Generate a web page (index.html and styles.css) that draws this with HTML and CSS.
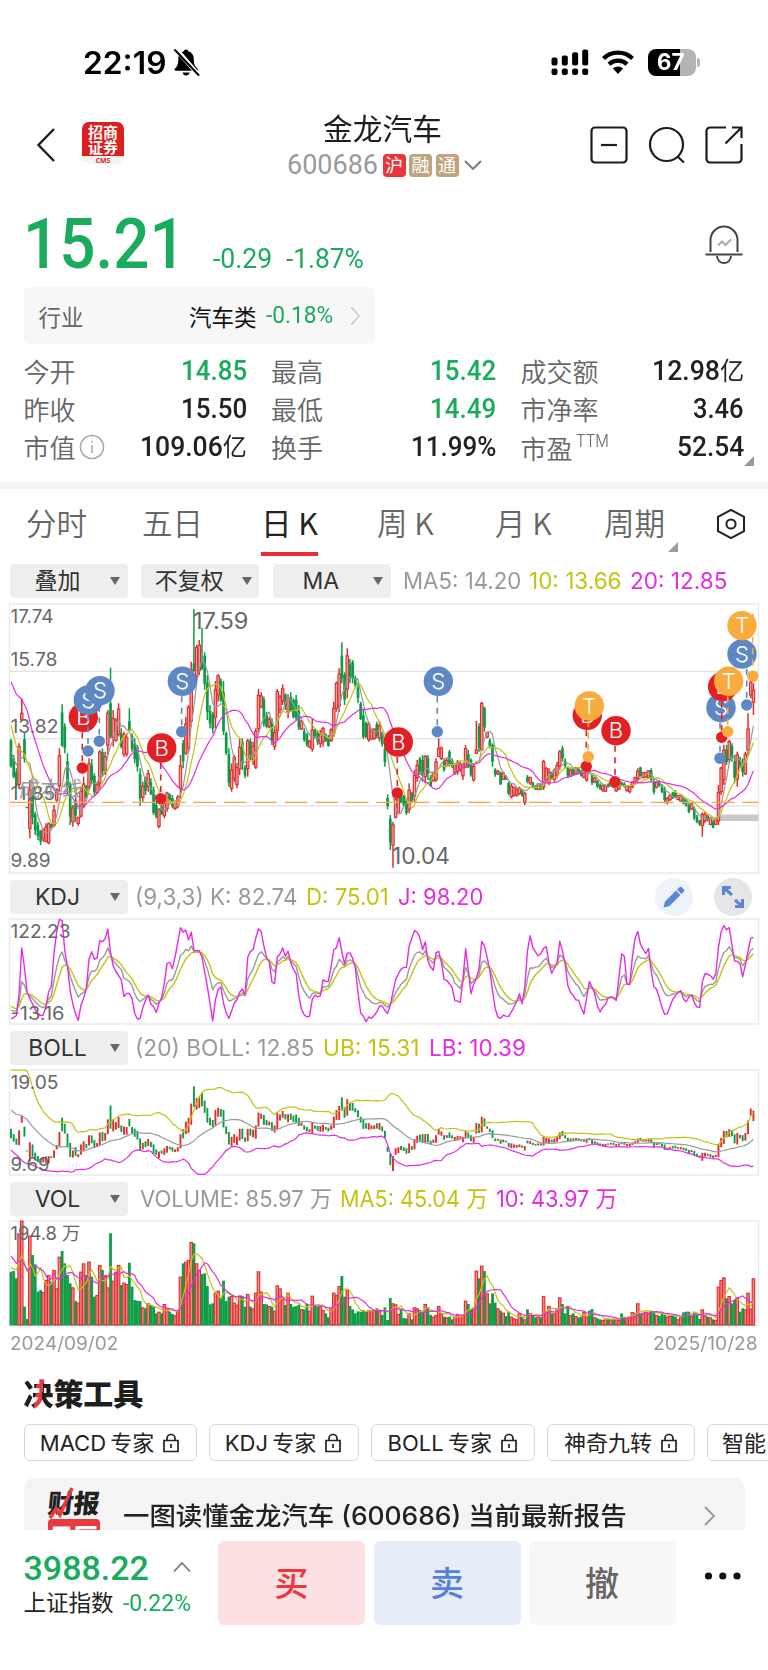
FILE: index.html
```html
<!DOCTYPE html>
<html lang="zh-CN">
<head>
<meta charset="utf-8">
<title>金龙汽车 600686</title>
<link rel="stylesheet" href="styles.css">
</head>
<body>
<div class="app">
  <div class="status">
    <span class="clock" data-w="83">22:19</span>
    <svg class="mute" width="28" height="30" viewBox="0 0 28 30"><path d="M13 1.500c1.300 0 2 .8 2.200 1.700 3.600 1 5.600 3.900 5.600 8 0 5 1.200 7 3.700 9.300.9 1 .3 2.200-1 2.200H3c-1.400 0-2-1.200-1-2.200C4.500 18.200 5.200 16 5.300 11.200c0-4.100 2-7 5.500-8 .2-.9.900-1.700 2.200-1.700zM9.500 24.500h7.200c-.5 1.900-1.800 3-3.600 3s-3.100-1.100-3.600-3z" fill="#000"/><path d="M3.500 1.500l22 25.500" stroke="#fff" stroke-width="4.500"/><path d="M2 2l23.500 25" stroke="#000" stroke-width="2" stroke-linecap="round"/></svg>
    <div class="status-right">
      <svg width="38" height="27" viewBox="0 0 38 27"><g fill="#000"><rect x="0.500" y="8.500" width="6" height="8" rx="2"/><rect x="10.800" y="6.500" width="6" height="10" rx="2"/><rect x="21.100" y="3.300" width="6" height="13.200" rx="2"/><rect x="31.200" y="0.500" width="6" height="16" rx="2"/><rect x="0.500" y="19.500" width="6" height="6.500" rx="2"/><rect x="10.800" y="19.500" width="6" height="6.500" rx="2"/><rect x="21.100" y="19.500" width="6" height="6.500" rx="2"/><rect x="31.200" y="19.500" width="6" height="6.500" rx="2"/></g></svg>
      <svg width="34" height="27" viewBox="0 0 34 27"><g fill="none" stroke="#000" stroke-width="4.200"><path d="M2.500 9.500a21 21 0 0 1 29 0"/><path d="M8 15.300a13 13 0 0 1 18 0"/></g><path d="M11.800 19.500a7.500 7.500 0 0 1 10.400 0L17 25z" fill="#000"/></svg>
      <div class="battery"><span data-w="27">67</span></div><i class="battery-tip"></i>
    </div>
  </div>

  <header class="header">
    <svg class="back" width="22" height="36" viewBox="0 0 22 36"><path d="M19 2L3.500 18 19 34" fill="none" stroke="#1d1d1f" stroke-width="2.400"/></svg>
    <div class="broker"><b data-w="30">招商</b><b data-w="30">证券</b><em>CMS</em></div>
    <div class="title">
      <h1 data-w="119">金龙汽车</h1>
      <div class="code"><span class="num" data-w="91">600686</span><i class="tag red">沪</i><i class="tag">融</i><i class="tag">通</i><svg width="20" height="12" viewBox="0 0 20 12"><path d="M2 2l8 8 8-8" fill="none" stroke="#777" stroke-width="1.800"/></svg></div>
    </div>
    <div class="tools">
      <svg width="38" height="38" viewBox="0 0 38 38"><rect x="1.500" y="1.500" width="35" height="35" rx="3.500"/><path d="M11 19h16"/></svg>
      <svg width="38" height="38" viewBox="0 0 38 38"><circle cx="18.500" cy="18.500" r="16.500"/><path d="M29.500 30.500l6.500 6"/></svg>
      <svg width="38" height="38" viewBox="0 0 38 38"><path d="M21 1.500H5A3.500 3.500 0 0 0 1.500 5v28A3.500 3.500 0 0 0 5 36.500h28a3.500 3.500 0 0 0 3.500-3.500V18M27 1.500h9.500V12M36.500 1.500L20.500 17.500"/></svg>
    </div>
  </header>

  <section class="quote">
    <div class="price-row">
      <span class="price num" data-w="163">15.21</span>
      <span class="chg num" data-w="59">-0.29</span>
      <span class="chg num" data-w="78">-1.87%</span>
      <svg class="alert" width="40" height="40" viewBox="0 0 40 40" fill="none" stroke="#444" stroke-width="2"><path d="M6.500 27V15a13.500 13.500 0 0 1 27 0v12M1.500 29.500h37M13 31c.5 4.500 3.500 7 7 7s6.500-2.500 7-7"/><path d="M14 20.500l4-4 3.500 3.500 5.500-5.500" stroke="#aaa"/></svg>
    </div>
    <div class="industry"><span class="lab">行业</span><span class="name">汽车类</span><span class="num green" data-w="67">-0.18%</span><svg width="12" height="22" viewBox="0 0 12 22"><path d="M2 2l8 9-8 9" fill="none" stroke="#ccc" stroke-width="1.600"/></svg></div>
    <div class="stats">
      <div><label>今开</label><span class="num green" data-w="66">14.85</span></div>
      <div><label>最高</label><span class="num green" data-w="66">15.42</span></div>
      <div><label>成交额</label><span class="num" data-w="92">12.98<u>亿</u></span></div>
      <div><label>昨收</label><span class="num" data-w="66">15.50</span></div>
      <div><label>最低</label><span class="num green" data-w="66">14.49</span></div>
      <div><label>市净率</label><span class="num" data-w="51">3.46</span></div>
      <div><label>市值<svg class="info" width="26" height="26" viewBox="0 0 26 26" fill="none" stroke="#aaa" stroke-width="1.600"><circle cx="13" cy="13" r="11.500"/><path d="M13 11v8M13 6.800v2"/></svg></label><span class="num" data-w="107">109.06<u>亿</u></span></div>
      <div><label>换手</label><span class="num" data-w="85">11.99%</span></div>
      <div class="corner"><label class="pe">市盈<sup data-w="33">TTM</sup></label><span class="num" data-w="67">52.54</span></div>
    </div>
  </section>

  <nav class="tabs">
    <span class="t1">分时</span><span class="t2">五日</span><span class="t3 on">日 K</span><span class="t4">周 K</span><span class="t5">月 K</span><span class="t6">周期</span>
    <svg width="30" height="32" viewBox="0 0 30 32" fill="none" stroke="#222" stroke-width="2"><path d="M15 1.800l13 7v14.400l-13 7-13-7V8.800z"/><circle cx="15" cy="16" r="4.600"/></svg>
  </nav>

  <div class="picks">
    <button>叠加</button><button>不复权</button><button>MA</button>
    <p><span class="c1" data-w="118">MA5: 14.20</span><span class="c2" data-w="93">10: 13.66</span><span class="c3" data-w="97">20: 12.85</span></p>
  </div>
  <svg id="kline" class="chart" width="768" height="275" viewBox="0 601 768 275"></svg>

  <div class="row">
    <button>KDJ</button>
    <p><span class="c1" data-w="162">(9,3,3) K: 82.74</span><span class="c2" data-w="83">D: 75.01</span><span class="c3" data-w="85">J: 98.20</span></p>
    <div class="round"><svg width="22" height="22" viewBox="0 0 22 22" fill="#5b87d6"><path d="M.5 21.500l1.500-6L13 4.500l4.500 4.500L6.500 20zM14 3.500l2-2c1-1 2-1 3 0l1.500 1.500c1 1 1 2 0 3l-2 2z"/></svg></div>
    <div class="round grey"><svg width="24" height="24" viewBox="0 0 24 24" fill="none" stroke="#5b87d6" stroke-width="3"><path d="M2.500 10V2.500H10M3 3l8 7M21.500 14v7.500H14M21 21l-7-6"/></svg></div>
  </div>
  <svg id="kdj" class="chart" width="768" height="110" viewBox="0 917 768 110"></svg>

  <div class="row">
    <button>BOLL</button>
    <p><span class="c1" data-w="179">(20) BOLL: 12.85</span><span class="c2" data-w="97">UB: 15.31</span><span class="c3" data-w="97">LB: 10.39</span></p>
  </div>
  <svg id="boll" class="chart" width="768" height="110" viewBox="0 1068 768 110"></svg>

  <div class="row vol">
    <button>VOL</button>
    <p><span class="c1" data-w="192">VOLUME: 85.97 万</span><span class="c2" data-w="148">MA5: 45.04 万</span><span class="c3" data-w="121">10: 43.97 万</span></p>
  </div>
  <svg id="volume" class="chart" width="768" height="110" viewBox="0 1219 768 110"></svg>
  <div class="dates"><span data-w="108">2024/09/02</span><span data-w="105">2025/10/28</span></div>

  <section class="decision">
    <h2><span class="jue">决</span>策工具</h2>
    <div class="chips">
      <span class="w1">MACD 专家<svg width="18" height="20" viewBox="0 0 18 20"><path d="M2 7.500h14v11H2zM5 7.500V5.500a4 4 0 0 1 8 0v2M9 11v4"/></svg></span>
      <span class="w2">KDJ 专家<svg width="18" height="20" viewBox="0 0 18 20"><path d="M2 7.500h14v11H2zM5 7.500V5.500a4 4 0 0 1 8 0v2M9 11v4"/></svg></span>
      <span class="w3">BOLL 专家<svg width="18" height="20" viewBox="0 0 18 20"><path d="M2 7.500h14v11H2zM5 7.500V5.500a4 4 0 0 1 8 0v2M9 11v4"/></svg></span>
      <span class="w4">神奇九转<svg width="18" height="20" viewBox="0 0 18 20"><path d="M2 7.500h14v11H2zM5 7.500V5.500a4 4 0 0 1 8 0v2M9 11v4"/></svg></span>
      <span class="w5">智能</span>
    </div>
    <div class="report">
      <div class="report-logo"><b>财报</b><svg width="28" height="38" viewBox="0 0 28 38"><path d="M2 33l6-9 4 6L24 3" fill="none" stroke="#ea3a40" stroke-width="3.500"/></svg><i>日历</i></div>
      <strong data-w="504">一图读懂金龙汽车 (600686) 当前最新报告</strong>
      <svg width="14" height="22" viewBox="0 0 14 22"><path d="M2 2l9 9-9 9" fill="none" stroke="#999" stroke-width="1.800"/></svg>
    </div>
  </section>

  <footer class="bar">
    <div class="index">
      <div class="index-top"><span class="num green" data-w="125">3988.22</span><svg width="20" height="12" viewBox="0 0 20 12"><path d="M2 10.500l8-8.500 8 8.500" fill="none" stroke="#777" stroke-width="1.800"/></svg></div>
      <div class="index-sub"><span data-w="90">上证指数</span><span class="num green" data-w="68">-0.22%</span></div>
    </div>
    <div class="act buy">买</div><div class="act sell">卖</div><div class="act cancel">撤</div>
    <svg class="more" width="38" height="10" viewBox="0 0 38 10" fill="#111"><circle cx="4.500" cy="5" r="3.600"/><circle cx="18.800" cy="5" r="3.600"/><circle cx="33" cy="5" r="3.600"/></svg>
  </footer>
</div>
<script src="charts.js"></script>
</body>
</html>
```

FILE: styles.css
```css
* { box-sizing: border-box; }
body {
  margin: 0;
  background: #fff;
  color: #222;
  font-family: Inter, "Noto Sans CJK SC", sans-serif;
}
.app { width: 768px; height: 1670px; overflow: hidden; }
svg { display: block; flex: none; }
button { border: 0; font: inherit; }
[data-w] { display: inline-block; white-space: pre; flex: none; }
[data-w] > .fit { display: inline-block; transform-origin: 0 50%; }
.num { font-family: Roboto, "Noto Sans CJK SC", sans-serif; font-weight: 500; }
.num u { text-decoration: none; font-weight: 400; }
.green { color: #1aab5c !important; }

/* status bar */
.status { height: 106px; padding: 19px 68px 0 83px; display: flex; align-items: center; }
.clock { font-size: 31px; font-weight: 600; color: #000; line-height: 40px; }
.mute { margin-left: 7px; }
.status-right { margin-left: auto; display: flex; align-items: center; }
.status-right > svg + svg { margin-left: 12px; }
.battery {
  width: 48px; height: 27px; margin-left: 13px; border-radius: 8px; padding-left: 9px;
  background: linear-gradient(90deg, #000 67%, #b4b4b4 67%);
  color: #fff; font-size: 23px; font-weight: 700; line-height: 27px;
}
.battery-tip { width: 3px; height: 9px; margin-left: 1px; border-radius: 0 4px 4px 0; background: #b4b4b4; }

/* header */
.header { height: 86px; padding: 0 25px 0 35px; display: flex; align-items: flex-start; }
.back { margin-top: 21px; }
.broker {
  width: 42px; height: 42px; margin: 16px 0 0 25px; border-radius: 7px; overflow: hidden;
  background: linear-gradient(#dc1f1f 82%, #f7f3f1 82%); color: #fff;
  display: flex; flex-direction: column; align-items: center; padding-top: 3px;
}
.broker b { height: 15px; font-size: 15px; line-height: 15px; font-weight: 700; }
.broker em { font: 700 7px/7px "Open Sans", sans-serif; color: #d22; margin-top: 2px; }
.title { flex: 1; display: flex; flex-direction: column; align-items: flex-start; padding-left: 199px; }
.title h1 { margin: 0; font-size: 30px; font-weight: 400; line-height: 42px; height: 42px; margin-top: 2px; color: #1d1d1f; }
.code { display: flex; align-items: center; height: 28px; margin: 1px 0 0 -36px; color: #999; gap: 3.500px; }
.code .num { font-size: 27px; font-weight: 400; line-height: 28px; margin-right: 1px; }
.tag { width: 23px; height: 23px; border-radius: 4px; background: #c0a47c; color: #fff; font-style: normal; font-size: 18px; line-height: 23px; text-align: center; }
.tag.red { background: #ea353c; }
.code svg { margin-left: 1px; }
.tools { display: flex; gap: 19.500px; margin-top: 20px; }
.tools svg { fill: none; stroke: #1d1d1f; stroke-width: 2.200; }

/* quote */
.quote { height: 297px; padding: 0 24px 0 23.500px; border-bottom: 7px solid #f4f4f4; }
.price-row { height: 95px; display: flex; align-items: flex-end; color: #1aab5c; }
.price { font-size: 70px; line-height: 80px; height: 83px; margin-left: -1px; }
.price-row .chg { font-size: 27px; line-height: 30px; height: 43px; margin-left: 27.500px; font-weight: 400; }
.price-row .chg + .chg { margin-left: 14px; }
.alert { margin: 0 0 22px auto; }
.industry {
  width: 351px; height: 57px; padding: 0 14px 0 15px; border-radius: 6px;
  background: #f7f7f7; display: flex; align-items: center; font-size: 22.500px;
}
.industry .lab { flex: 1; color: #666; }
.industry .name { color: #111; margin-right: 9px; }
.industry .num { font-size: 23px; margin-right: 16px; font-weight: 400; line-height: 26px; padding-top: 1px; }
.stats {
  display: grid; grid-template-columns: 223px 225px 223px; column-gap: 24.500px; grid-auto-rows: 38px;
  padding-top: 8px;
}
.stats div { display: flex; justify-content: space-between; align-items: center; font-size: 26px; line-height: 38px; }
.stats label { display: flex; align-items: center; color: #666; font-family: "Noto Sans CJK SC", sans-serif; font-weight: 350; height: 36px; line-height: 36px; }
.stats .num { font-size: 27.500px; }
.stats .num u { font-size: 25px; }
.info { margin-left: 3px; }
.stats sup { font: 300 17px/18px Inter, sans-serif; align-self: flex-start; margin: 3px 0 0 3px; }
.stats .pe { padding-top: 2px; height: 40px; }
.stats .corner { position: relative; }
.corner::after {
  content: ""; position: absolute; right: -10px; bottom: 0;
  border: 5px solid #999; border-left-color: transparent; border-top-color: transparent;
}

/* tabs */
.tabs { height: 74px; display: flex; color: #666; font-size: 30.500px; font-weight: 350; line-height: 67px; padding-left: 26px; font-family: "Noto Sans CJK SC", sans-serif; }
.tabs span { white-space: pre; flex: none; height: 67px; }
.t1, .t2 { width: 116px; }
.t3 { width: 57px; margin-left: 3px; text-align: center; }
.tabs .on { color: #222; font-weight: 400; border-bottom: 4px solid #ec2a30; }
.t4 { margin-left: 59px; width: 118px; }
.t5 { width: 109px; }
.t6 { width: 74px; position: relative; }
.t6::after { content: ""; position: absolute; right: 0; bottom: 4px; border: 5px solid #999da3; border-left-color: transparent; border-top-color: transparent; }
.tabs svg { margin: 19px 0 0 38px; }

/* indicator rows */
.picks, .row { display: flex; align-items: center; padding: 0 10px 0 9.500px; }
.picks { height: 38px; padding-bottom: 2px; }
.row { height: 41px; }
.picks button, .row button {
  width: 118px; height: 34px; margin-right: 13.700px; padding: 0 22px 0 0; border-radius: 4px; background: #eee;
  color: #333; font-size: 23px; line-height: 34px; position: relative; text-align: center; flex: none;
}
.picks button::after, .row button::after {
  content: ""; position: absolute; right: 7.500px; top: 13px;
  border: 5.500px solid transparent; border-top: 8px solid #666; border-bottom: 0;
}
.picks p, .row p { margin: 0 auto 0 -2px; display: flex; gap: 8px; font-size: 23px; line-height: 34px; white-space: nowrap; font-family: Inter, "Noto Sans CJK SC", sans-serif; }
.row p { margin-left: -6.500px; gap: 9px; }
.row.vol p { margin-left: -1.500px; gap: 8px; }
.c1 { color: #999; }
.c2 { color: #c3c313; }
.c3 { color: #e62be6; }
.round { width: 38px; height: 38px; border-radius: 50%; background: #edf2fb; display: grid; place-items: center; margin-right: 21px; }
.round.grey { background: #e6e6e8; margin-right: 6px; }
.chart text { font-family: Inter, "Noto Sans CJK SC", sans-serif; fill: #666; }
.frame { fill: none; stroke: #e8e8e8; stroke-width: 1.300; }
.grid { stroke: #e2e2e2; stroke-width: 1.200; }
.line { fill: none; stroke-width: 1.200; stroke-linejoin: round; }
.ma5 { stroke: #999; }
.ma10 { stroke: #c3c313; }
.ma20 { stroke: #e62be6; }
.kdj .line { stroke-width: 1.400; }
.dates { height: 30px; padding: 0 10px; display: flex; justify-content: space-between; align-items: center; font-size: 18.500px; line-height: 28px; padding-bottom: 2px; color: #999; }

/* decision tools */
.decision { height: 171px; overflow: hidden; padding-left: 23.500px; }
.decision h2 { margin: 12px 0 0; font-size: 30px; line-height: 42px; font-weight: 900; letter-spacing: -.1px; color: #1e1e1e; font-family: "Noto Sans CJK SC", sans-serif; }
.jue { background: linear-gradient(96deg, #1e1e1e 42%, #ea3a40 42%, #ea3a40 62%, #1e1e1e 62%); -webkit-background-clip: text; background-clip: text; color: transparent; }
.chips { display: flex; gap: 12px; margin-top: 11px; height: 37px; }
.chips span {
  flex: none; height: 37px; border: 1.500px solid #d8d8d8; border-radius: 6px; display: flex; align-items: center; justify-content: center; gap: 8px;
  font-size: 22px; color: #222; white-space: nowrap; line-height: 34px; word-spacing: -2px;
}
.chips svg { fill: none; stroke: #222; stroke-width: 1.700; }
.w1 { width: 173px; }
.w2 { width: 150px; }
.w3 { width: 164.500px; }
.w4 { width: 148px; }
.w5 { width: 100px; }
.chips .w5 { justify-content: flex-start; padding-left: 14px; }
.report { width: 721px; height: 80px; margin-top: 17px; border-radius: 10px; background: #f4f4f4; display: flex; align-items: flex-start; }
.report-logo { width: 54px; margin: 7px 0 0 24px; position: relative; flex: none; }
.report-logo b { display: block; font: 900 26px/34px "Noto Sans CJK SC", sans-serif; height: 34px; transform: skewX(-6deg); color: #222; }
.report-logo svg { position: absolute; left: 0; top: 0; }
.report-logo i { display: block; width: 52px; height: 32px; border-radius: 4px 4px 0 0; background: #ea3a40; color: #fff; font: 900 24px/34px "Noto Sans CJK SC", sans-serif; text-align: center; }
.report strong { font-size: 25.500px; line-height: 40px; font-weight: 500; margin: 18px 0 0 21px; }
.report > svg { margin: 27px 28px 0 auto; }

/* bottom bar */
.bar { height: 140px; padding-left: 23.500px; display: flex; background: #fff; }
.index { width: 194.500px; padding-top: 18px; }
.index-top { display: flex; align-items: center; height: 40px; gap: 23px; }
.index-top .num { font-size: 34px; line-height: 40px; }
.index-top svg { margin-bottom: 3px; }
.index-sub { display: flex; align-items: center; height: 29px; gap: 9px; font-size: 22.500px; line-height: 28px; }
.index-sub .num { font-size: 24px; font-weight: 400; }
.act { width: 147px; height: 84px; margin: 11px 8.500px 0 0; border-radius: 6px; font-size: 34px; line-height: 86px; text-align: center; font-weight: 500; }
.act.sell, .act.cancel { margin-right: 8px; }
.buy { background: #fde0e1; color: #ed363d; }
.sell { background: #e6ecf8; color: #5582d8; }
.cancel { background: #f7f7f7; color: #666; }
.more { margin: 41px 0 0 20px; }
```

FILE: charts.js
```js
// Candles: colour letter, high and low, in thirds of a pixel below y=595.
const CANDLES = `g432,518 g480,550 g520,578 r445,582 r310,375 g412,503 k630,640 r555,730 g575,688 g650,720 g680,735 g705,750
r700,740 r685,742 r682,748 g685,700 r630,697 r580,620 r460,590 g328,455 g385,475 g475,600 g560,690 r630,695 g600,680 r665,692
r575,668 r545,640 g570,610 r490,585 g492,565 g535,600 r562,598 r465,585 g460,545 r470,540 r345,480 g218,430 r345,455 r370,440
r325,425 g400,460 r410,485 r415,485 g340,410 g415,470 g430,505 g450,530 g520,632 r560,620 g545,600 r525,590 g550,600 g575,660
g620,670 r640,700 g630,660 r610,670 r590,650 g595,620 g600,640 r620,645 r600,640 r480,610 g435,520 r365,480 r330,470 r200,395
g42,230 r150,255 r135,240 g98,225 g172,285 g240,375 g330,400 g350,415 r258,400 r238,320 g250,320 g258,420 g410,480 g460,575
r505,590 r480,560 r505,580 r430,540 g430,525 g510,550 r432,545 g430,495 r440,510 r400,522 r282,410 r292,340 g305,395 g350,400
r365,400 g370,450 r400,465 r282,435 r300,355 r268,330 g295,345 r298,370 g292,350 g310,370 g300,375 g330,405 r375,405 g400,440
g415,455 r435,460 r370,470 g400,430 g405,450 r405,458 r395,455 g415,440 g420,455 r400,440 r320,425 r260,350 r220,350 g142,265
g232,330 r160,310 g192,265 g195,265 g242,280 g262,325 g320,375 g345,432 g380,430 r380,440 r400,435 r400,435 g380,430 r378,440
g410,455 g450,515 g598,643 g660,765 r680,818 r610,670 r600,655 g590,625 g600,635 g610,660 r565,655 g590,625 r525,620 r495,560
g485,540 g480,560 r480,565 g480,555 g540,575 r530,560 r490,560 r430,485 r455,495 g490,530 r490,515 g465,515 g490,520 r505,540
r495,540 r500,530 r505,555 r450,520 g465,520 g490,545 r505,560 r378,475 g385,470 r320,465 g335,410 r410,430 g430,460 g445,515
g520,545 r525,540 g530,570 r530,555 g540,555 g560,600 r565,610 r575,605 r580,605 r575,600 g585,605 r590,630 g540,565 r545,570
g560,580 g570,585 r565,585 g565,585 r495,585 r515,560 r520,570 g530,555 r520,560 r500,550 r465,525 g452,500 g490,520 g515,550
r520,545 g518,540 r515,540 g518,538 g525,545 r530,550 r520,560 g515,535 g535,570 r545,565 g555,580 g565,585 r570,590 r570,590
g565,578 r560,575 g560,580 r570,590 r565,585 g560,572 g562,578 r570,590 r570,595 r560,580 r545,565 r520,560 g515,545 r530,550
r530,548 r525,550 g520,560 g550,598 r560,580 g555,575 g568,595 g575,625 r605,628 r600,618 g590,612 g585,610 r600,615 r600,620
g605,628 g610,635 g625,655 r625,645 g635,675 g660,685 g675,692 r652,725 r650,685 g660,680 r665,690 g675,700 r670,690 r570,690
r515,600 r450,570 g450,510 r435,505 g445,500 g480,565 r470,575 g485,520 g490,545 r470,540 r355,480 r245,310 r265,360`.trim().split(/\s+/).map((s, i) => {
  const [h, l] = s.slice(1).split(',').map(Number);
  const c = s[0], d = l - h;
  let top = h + d * (0.05 + (i * 37 % 11) / 50), bot = l - d * (0.05 + (i * 53 % 13) / 60);
  return { c, h, l, top, bot };
});
const BODIES = { 4: [355, 374], 19: [352, 452], 37: [325, 425], 44: [378, 405], 68: [205, 228], 71: [200, 222], 112: [405, 462], 123: [182, 250], 142: [690, 750], 159: [460, 485], 173: [465, 475], 175: [325, 465], 257: [658, 692], 274: [402, 465], 275: [262, 300], 276: [285, 322] };
for (const i in BODIES) [CANDLES[i].top, CANDLES[i].bot] = BODIES[i];

// Bar tops for the volume pane, in thirds of a pixel below y=1170.
const VOLUMES = `305 303 325 190 152 410 447 197 255 283 365 360 366 330 315 335 300 355 260 243 280 315 340 352 393 398 305 280 315 275
320 380 375 285 300 318 352 190 332 305 285 345 338 342 278 350 390 392 393 412 415 400 405 410 430 425 430 402 415 425 432 436 425 320
280 275 270 216 220 280 300 312 310 348 403 400 368 362 385 332 393 380 378 398 404 378 380 410 372 410 415 368 304 365 402 403 408 410 422
346 355 385 405 368 402 410 408 404 417 418 402 422 377 408 410 409 420 430 442 415 368 375 348 318 380 360 408 418 430 424 425 420 425
420 422 420 415 420 435 412 450 384 400 403 432 418 444 445 430 448 412 415 420 425 402 412 435 440 435 408 430 440 442 440 448 440 432
438 435 392 402 418 415 302 325 287 303 370 400 370 398 415 422 428 438 425 440 445 448 430 440 448 418 430 435 442 440 442 378 425 408
430 430 415 382 402 430 408 435 430 438 442 440 425 440 422 417 442 445 448 450 448 445 448 446 448 450 430 440 442 438 426 430 400 430
428 425 430 422 425 435 438 430 435 440 438 435 440 448 442 427 425 425 438 425 430 447 418 436 440 442 448 450 350 330 322 385 378 400 390
382 425 415 418 368 416 325`.trim().split(/\s+/).map(Number);

// J line knots (x, y) in thirds of a pixel from (0, 870).
const J = `33,447 41,442 49,438 57,375 65,232 73,290 81,365 89,385 97,400 105,418 113,430 121,437 130,435 138,410 146,365 154,350
162,250 170,185 178,148 186,148 194,240 202,285 210,360 218,400 226,430 235,452 243,405 251,385 259,355 267,268 275,245 283,268
291,265 299,212 307,216 315,208 323,173 332,250 340,290 348,305 364,330 372,380 380,370 388,370 396,385 404,430 412,447 420,447
428,415 436,392 444,373 452,402 461,410 469,428 477,400 485,382 493,340 501,280 509,277 517,297 525,262 533,220 541,172 549,187
557,178 565,212 573,182 582,242 598,242 606,262 614,305 622,350 630,400 638,455 646,390 654,360 662,348 670,398 678,427 686,447
694,425 702,400 710,392 718,368 727,357 735,378 743,262 751,245 759,240 767,205 775,176 783,182 791,225 799,262 807,270 815,335
823,350 831,262 839,255 847,230 855,262 863,238 871,275 879,298 887,298 895,370 903,415 911,433 919,440 928,443 936,390 944,375
960,385 968,328 984,340 992,300 1000,240 1009,235 1017,200 1033,285 1041,250 1049,247 1057,262 1065,285 1073,360 1081,428
1089,435 1097,458 1105,440 1113,446 1129,430 1137,408 1147,408 1162,433 1172,402 1186,330 1202,298 1212,292 1220,292 1227,230
1243,182 1251,185 1259,200 1267,242 1275,210 1283,270 1299,308 1307,250 1315,240 1323,268 1331,328 1339,330 1356,350 1364,392
1372,392 1380,403 1388,340 1396,230 1404,290 1412,375 1420,345 1436,310 1444,213 1452,222 1468,290 1476,350 1484,410 1492,440
1500,448 1508,435 1525,441 1542,412 1550,395 1558,370 1566,403 1574,355 1582,245 1590,195 1598,232 1614,258 1622,252 1632,233
1639,230 1647,280 1655,310 1671,280 1679,213 1687,240 1695,280 1703,345 1711,367 1719,375 1727,390 1735,388 1743,412 1751,437
1759,390 1767,332 1783,365 1791,405 1799,428 1807,412 1815,408 1823,385 1831,380 1842,385 1848,398 1856,330 1864,252 1872,248
1880,340 1888,355 1896,270 1904,210 1912,177 1920,220 1928,235 1937,252 1945,230 1953,300 1961,350 1969,355 1977,380 1985,410
1993,433 2001,433 2009,412 2017,390 2025,378 2033,370 2041,357 2049,385 2057,398 2073,370 2081,395 2098,422 2106,340 2114,310
2130,315 2138,328 2146,325 2154,240 2162,190 2170,163 2178,182 2187,168 2195,220 2203,273 2219,275 2227,325 2235,290 2243,250
2251,205 2259,202`;

const N = CANDLES.length;
const zx = i => 33 + 8.07 * i;
const X = i => zx(i) / 3;
const knots = s => s.trim().split(/\s+/).map(p => p.split(',').map(Number));
const at = (ks, x) => {
  for (let i = 1; i < ks.length; i++) if (x <= ks[i][0]) {
    const [a, b] = [ks[i - 1], ks[i]];
    return a[1] + (b[1] - a[1]) * Math.max(0, (x - a[0]) / (b[0] - a[0]));
  }
  return ks[ks.length - 1][1];
};
const f = n => n.toFixed(2);
const path = (ys, cls, y0) => `<polyline class="line ${cls}" points="${ys.map((y, i) => f(X(i)) + ',' + f(y0 + y / 3)).join(' ')}"/>`;
// Moving average; the days before the window fills come from the given knots.
const ma = (v, n, lead) => v.map((_, i) => i < n - 1 && lead ? at(lead, zx(i)) : v.slice(Math.max(0, i - n + 1), i + 1).reduce((a, b) => a + b) / Math.min(n, i + 1));
const label = (x, y, s, size, w, extra = '') => `<text x="${x}" y="${y}" font-size="${size}" textLength="${w}" lengthAdjust="spacingAndGlyphs" ${extra}>${s}</text>`;
const frame = (y, h) => `<rect class="frame" x="9.500" y="${y}" width="749" height="${h}"/>`;
const RED = '#e22b2b', GREEN = '#0d9b45';

const close = CANDLES.map(k => k.c === 'r' ? k.top : k.bot);
const lead5 = knots('33,470 49,510 57,495 65,485');
const lead10 = knots('33,390 49,455 65,468 73,478 89,520 105,560');
const lead20 = knots('33,260 49,298 65,312 81,345 97,410 113,460 129,510 146,550 162,585 178,598 188,594');
const ma5 = ma(close, 5, lead5), ma10 = ma(close, 10, lead10), ma20 = ma(close, 20, lead20);

// K line pane
let s = frame(604, 269);
for (const y of [671.3, 738.6, 805.8]) s += `<path class="grid" d="M9.500 ${y}H758.500"/>`;
s += '<rect x="717" y="814.500" width="41.500" height="6.500" fill="#c9c9c9"/>';
CANDLES.forEach((k, i) => {
  const x = X(i), Y = v => 595 + v / 3;
  const col = k.c === 'r' ? RED : k.c === 'g' ? GREEN : '#555';
  if (k.c === 'k') { s += `<path d="M${f(x - 1.500)} ${Y(638)}h3" stroke="#555" stroke-width="1.200"/>`; return; }
  s += `<path d="M${f(x)} ${f(Y(k.h))}V${f(Y(k.l))}" stroke="${col}" stroke-width="1.500"/>`;
  s += k.c === 'r'
    ? `<rect x="${f(x - 1.200)}" y="${f(Y(k.top))}" width="2.400" height="${f((k.bot - k.top) / 3)}" fill="#f2a0a0" stroke="${col}" stroke-width="1.100"/>`
    : `<rect x="${f(x - 1.350)}" y="${f(Y(k.top))}" width="2.700" height="${f((k.bot - k.top) / 3)}" fill="${col}"/>`;
});
s += path(ma5, 'ma5', 595) + path(ma10, 'ma10', 595) + path(ma20, 'ma20', 595);
s += '<path d="M10.200 802.300H758" stroke="#fba63c" stroke-width="1.300" stroke-dasharray="22.800 7.700"/>';
s += label(10.5, 622.5, '17.74', 18, 43) + label(10.5, 666, '15.78', 18, 47) + label(10.5, 733, '13.82', 18, 48) + label(10.5, 800, '11.85', 18, 45) + label(10.5, 866.5, '9.89', 18, 40);
s += label(193, 628.500, '17.59', 22.500, 55.500) + label(392, 864, '10.04', 22.500, 58);
s += label(19, 796, '成本线', 21, 64, 'style="fill:#999;font-weight:350"');
const COL = { B: '#e22023', S: '#5d88c3', T: '#faab3d' };
const MARKS = [['B', 83.3, 717.3, 82.3, 768], ['S', 88.3, 700, 88, 751], ['S', 100, 690.7, 99.3, 741.3], ['B', 161.7, 748, 160.7, 798.7], ['S', 182.3, 681.3, 181.7, 731.7],
  ['B', 398.3, 742, 397.3, 793], ['S', 438.3, 681.3, 437.3, 731.7], ['B', 587.3, 715.3, 586.3, 766.3], ['T', 589.3, 706, 588.3, 756.7], ['B', 616, 730.7, 615, 781.7],
  ['S', 721, 707.7, 720, 758.3], ['B', 722.7, 686.7, 721.7, 737.3], ['T', 728.7, 681.3, 727.7, 731.7], ['S', 742, 654, 746.7, 705], ['T', 742, 625.7, 752.7, 676.3]];
for (const [t, x, y, dx, dy] of MARKS) {
  s += `<circle cx="${x}" cy="${y}" r="14.700" fill="${COL[t]}"/><text x="${x}" y="${y + 7.6}" font-size="22" text-anchor="middle" style="fill:#fff;font-weight:300">${t}</text>`;
  const start = dx > 750 ? y - 12 : y + 15;
  s += `<path d="M${dx} ${start}V${dy}" stroke="${COL[t]}" stroke-width="1.600" stroke-dasharray="6 5.500"/><circle cx="${dx}" cy="${dy}" r="5.700" fill="${COL[t]}"/>`;
}
document.getElementById('kline').innerHTML = s;

// KDJ pane: J = 3K - 2D and D follows K with a one-third weight
const jk = knots(J), j = CANDLES.map((_, i) => at(jk, zx(i)));
let d = 402;
const D = j.map(v => d = (6 * d + v) / 7), K = j.map((v, i) => (v + 2 * D[i]) / 3);
s = frame(919, 105) + `<g class="kdj">${path(K, 'ma5', 870)}${path(D, 'ma10', 870)}${path(j, 'ma20', 870)}</g>`;
s += label(10.5, 937.5, '122.23', 18, 60) + label(10.5, 1019.5, '-13.16', 18, 54);
document.getElementById('kdj').innerHTML = s;

// BOLL pane: the candles again on the 9.69 to 19.05 scale, with 20-day bands
const by = v => (1084.7 + (595 + v / 3 - 604) * 0.3272 - 870) * 3;
const up0 = knots('33,600 73,600 81,603 90,625 97,650 113,695 130,725 146,742 162,755 175,757 188,748');
const lo0 = knots('33,840 60,865 75,880 92,882 110,892 140,902 175,905 190,905');
const up = [], lo = [], mid = ma20.map(by);
close.forEach((_, i) => {
  if (i < 19) { up.push(at(up0, zx(i))); lo.push(at(lo0, zx(i))); return; }
  const w = close.slice(i - 19, i + 1).map(by), m = w.reduce((a, b) => a + b) / 20;
  const sd = Math.sqrt(w.reduce((a, b) => a + (b - m) ** 2, 0) / 19);
  up.push(Math.max(600, m - 2 * sd)); lo.push(Math.min(913, m + 2 * sd));
});
s = frame(1070, 105);
CANDLES.forEach((k, i) => {
  s += `<path d="M${f(X(i))} ${f(870 + by(k.h) / 3)}V${f(870 + by(k.l) / 3)}" stroke="${k.c === 'r' ? RED : k.c === 'g' ? GREEN : '#777'}" stroke-width="1.900"/>`;
});
s += path(mid, 'ma5', 870) + path(up, 'ma10', 870) + path(lo, 'ma20', 870);
s += label(10.5, 1088.5, '19.05', 18, 48) + label(10.5, 1171, '9.69', 18, 39);
document.getElementById('boll').innerHTML = s;

// Volume pane
s = frame(1221, 104.5);
VOLUMES.forEach((v, i) => {
  if (i >= N) return;
  const y = 1170 + v / 3, h = 1325.5 - y, r = CANDLES[i].c === 'r';
  s += r
    ? `<rect x="${f(X(i) - 1.250)}" y="${f(y + .5)}" width="2.500" height="${f(h - 1)}" fill="#f08a8a" stroke="#e22b2b" stroke-width="1.100"/>`
    : `<rect x="${f(X(i) - 1.400)}" y="${f(y)}" width="2.800" height="${f(h)}" fill="#0f9d48"/>`;
});
const v10 = knots('33,258 49,280 65,268 81,300 105,288');
s += path(ma(VOLUMES, 5, knots('33,293 49,300 65,260')), 'ma10', 1170) + path(ma(VOLUMES, 10, v10), 'ma20', 1170);
s += label(10.5, 1240, '194.8 万', 18, 70);
document.getElementById('volume').innerHTML = s;

document.querySelectorAll('[data-w]').forEach(el => {
  const inner = document.createElement('span');
  inner.className = 'fit';
  while (el.firstChild) inner.appendChild(el.firstChild);
  el.appendChild(inner);
  const w = +el.dataset.w;
  inner.style.transform = `scaleX(${w / inner.offsetWidth})`;
  el.style.width = w + 'px';
});
```
